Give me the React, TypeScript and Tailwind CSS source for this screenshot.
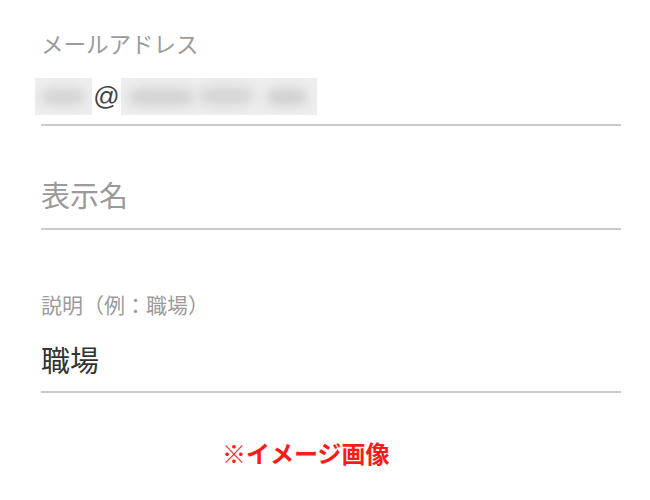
const jp = { fontFamily: '"Noto Sans CJK JP", "Noto Sans", sans-serif' };

const Field = ({ children }: { children: React.ReactNode }) => (
  <div className="flex flex-col">
    {children}
    <div className="h-[2px] w-[580px] bg-[#cbcbcb]" />
  </div>
);

export default function App() {
  return (
    <div className="w-[650px] h-[500px] bg-white overflow-hidden" style={jp}>
      <div className="flex flex-col pl-[41px] pt-[28px]">
        <Field>
          <div className="text-[22.5px] leading-[30px] text-[#9b9b9b]">メールアドレス</div>
          <div className="flex items-center h-[38px] mt-[19px] mb-[9px] -ml-[6px]">
            <div className="relative w-[57px] h-[37px] bg-[#eeeeee] overflow-hidden">
              <div className="absolute left-[6px] top-[11px] w-[44px] h-[16px] rounded-full bg-[#d2d2d2] blur-[6px]" />
            </div>
            <span
              className="w-[29px] text-center text-[26px] leading-none text-[#444]"
              style={{ fontFamily: '"Liberation Sans", Arial, sans-serif' }}
            >
              @
            </span>
            <div className="relative w-[196px] h-[37px] bg-[#eeeeee] overflow-hidden">
              <div className="absolute left-[8px] top-[11px] w-[64px] h-[16px] rounded-full bg-[#d0d0d0] blur-[6px]" />
              <div className="absolute left-[78px] top-[9px] w-[54px] h-[18px] rounded-full bg-[#d4d4d4] blur-[6px]" />
              <div className="absolute left-[146px] top-[11px] w-[40px] h-[16px] rounded-full bg-[#cecece] blur-[6px]" />
            </div>
          </div>
        </Field>
        <Field>
          <div className="text-[29px] leading-[36px] text-[#9a9a9a] mt-[50px] mb-[16px]">表示名</div>
        </Field>
        <Field>
          <div className="text-[21px] leading-[28px] text-[#9b9b9b] mt-[60px]">説明（例：職場）</div>
          <div className="text-[29px] leading-[36px] text-[#333] mt-[23px] mb-[14px]">職場</div>
        </Field>
        <div className="text-[24px] leading-[30px] font-bold text-[#ff1a1a] mt-[45px] ml-[181px]">
          ※イメージ画像
        </div>
      </div>
    </div>
  );
}
